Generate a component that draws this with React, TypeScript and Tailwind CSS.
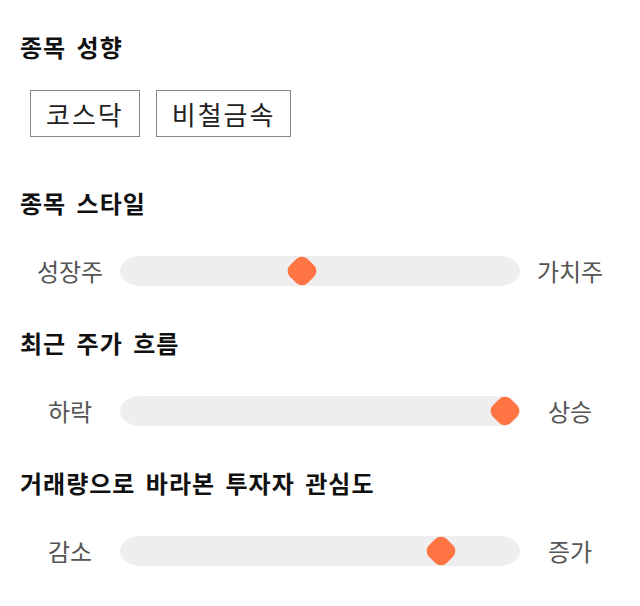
const FONT = "font-['Noto_Sans_CJK_KR','Noto_Sans',sans-serif]"

type SliderProps = { left: string; right: string; pos: number }

function Heading({ children }: { children: string }) {
  return (
    <div className="text-[24px] leading-[30px] tracking-[1px] [word-spacing:4px] font-bold text-[#111]">
      {children}
    </div>
  )
}

function Chip({ children }: { children: string }) {
  return (
    <div className="h-[47px] px-[15px] border border-[#888] flex items-center text-[26px] tracking-[2px] text-[#222]">
      {children}
    </div>
  )
}

function Slider({ left, right, pos }: SliderProps) {
  return (
    <div className="flex items-center h-[30px]">
      <div className="w-[100px] text-center text-[24px] text-[#555]">{left}</div>
      <div className="relative flex-1 h-[30px] bg-[#eeeeee] rounded-[20px/15px]">
        {/* thumb */}
        <div
          className="absolute top-1/2 w-[25px] h-[25px] -translate-x-1/2 -translate-y-1/2 rotate-45 rounded-[8px] bg-[#ff7442]"
          style={{ left: pos }}
        />
      </div>
      <div className="w-[100px] text-center text-[24px] text-[#555]">{right}</div>
    </div>
  )
}

export default function App() {
  return (
    <div className={`${FONT} bg-white w-[640px] h-[606px] px-5 pt-8`}>
      <Heading>종목 성향</Heading>
      <div className="flex gap-4 ml-[10px] mt-7">
        <Chip>코스닥</Chip>
        <Chip>비철금속</Chip>
      </div>

      <div className="mt-[51px]">
        <Heading>종목 스타일</Heading>
      </div>
      <div className="mt-[38px]">
        <Slider left="성장주" right="가치주" pos={182} />
      </div>

      <div className="mt-[42px]">
        <Heading>최근 주가 흐름</Heading>
      </div>
      <div className="mt-[38px]">
        <Slider left="하락" right="상승" pos={385} />
      </div>

      <div className="mt-[42px]">
        <Heading>거래량으로 바라본 투자자 관심도</Heading>
      </div>
      <div className="mt-[38px]">
        <Slider left="감소" right="증가" pos={321} />
      </div>
    </div>
  )
}
